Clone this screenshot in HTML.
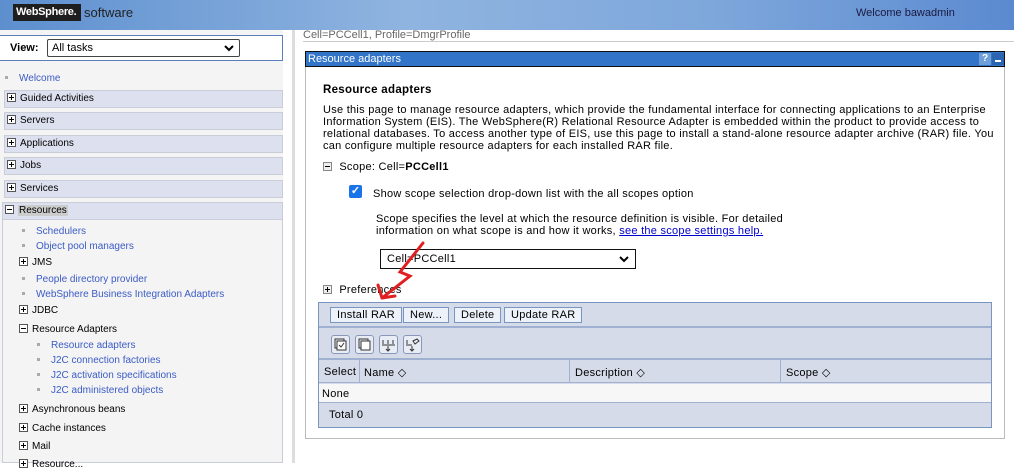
<!DOCTYPE html>
<html><head><meta charset="utf-8"><style>
*{margin:0;padding:0;box-sizing:border-box}
body{width:1014px;height:463px;overflow:hidden;background:#fff;font-family:"Liberation Sans",Tahoma,sans-serif;font-size:11px;color:#000;position:relative}
.a{position:absolute;white-space:nowrap}
#hdr{left:0;top:0;width:1014px;height:30px;background:linear-gradient(90deg,#5d8fcf 0%,#8fb4e0 40%,#7ea7db 70%,#5b8ad0 100%)}
#logo{left:13px;top:4px;width:68px;height:17px;background:#1e1e1e;color:#fff;font-weight:bold;font-size:11px;padding:2px 3px;letter-spacing:-.3px}
.pm{display:inline-block;width:9px;height:9px;border:1px solid #555;background:#fff;position:relative;vertical-align:-1px;margin-right:4px}
.pm:before{content:"";position:absolute;left:1px;top:3px;width:5px;height:1px;background:#000}
.pm.p:after{content:"";position:absolute;left:3px;top:1px;width:1px;height:5px;background:#000}
.nav{font-size:10px}
.sec{left:4px;width:279px;height:18px;background:#dde1ef;border:1px solid #c9cdd8;padding:2px 2px}
.lk{color:#3b5bc6}
.bl{display:inline-block;width:3px;height:3px;background:#aaa;margin-right:11px;vertical-align:2px}
.btn{position:absolute;top:307px;height:16px;border:1px solid #7a95c0;background:#edf1f9;padding:1px 6px;font-size:11px}
.ic{position:absolute;top:335px;width:19px;height:19px;border:1px solid #8898b8;border-radius:3px;background:#e8ecf4}
.main{letter-spacing:.27px}
</style></head><body>
<div id="hdr" class="a"></div>
<div id="logo" class="a">WebSphere.</div>
<div class="a" style="left:84px;top:5px;font-size:13px;color:#222">software</div>
<div class="a" style="left:856px;top:7px;color:#1a1a40">Welcome bawadmin</div>

<div class="a" style="left:0;top:30px;width:283px;height:433px;background:#f4f4f4"></div>
<div class="a" style="left:292px;top:30px;width:3px;height:433px;background:#ddd"></div>
<div class="a" style="left:0;top:35px;width:283px;height:26px;background:#fff;border:1px solid #5b7fb8;border-left:none"></div>
<div class="a" style="left:10px;top:42px;font-weight:bold">View:</div>
<div class="a" style="left:47px;top:39px;width:193px;height:18px;border:1px solid #444;border-radius:2px;background:#fff;padding:2px 4px">All tasks<svg style="position:absolute;right:5px;top:5px" width="10" height="7"><path d="M1 1 L5 5 L9 1" stroke="#000" stroke-width="2" fill="none"/></svg></div>
<div class="a nav" style="left:5px;top:73px"><span class="bl"></span><span class="lk">Welcome</span></div>
<div class="a sec nav" style="top:90px"><span class="pm p"></span>Guided Activities</div>
<div class="a sec nav" style="top:112px"><span class="pm p"></span>Servers</div>
<div class="a sec nav" style="top:135px"><span class="pm p"></span>Applications</div>
<div class="a sec nav" style="top:157px"><span class="pm p"></span>Jobs</div>
<div class="a sec nav" style="top:180px"><span class="pm p"></span>Services</div>
<div class="a" style="left:2px;top:202px;width:281px;height:261px;border:1px solid #c9cdd8;background:#f4f4f4"></div>
<div class="a sec nav" style="top:202px;left:2px;width:281px"><span class="pm"></span><span style="background:#ccc;padding:0 1px">Resources</span></div>
<div class="a nav" style="left:22px;top:226px"><span class="bl"></span><span class="lk">Schedulers</span></div>
<div class="a nav" style="left:22px;top:241px"><span class="bl"></span><span class="lk">Object pool managers</span></div>
<div class="a nav" style="left:19px;top:257px"><span class="pm p"></span>JMS</div>
<div class="a nav" style="left:22px;top:274px"><span class="bl"></span><span class="lk">People directory provider</span></div>
<div class="a nav" style="left:22px;top:289px"><span class="bl"></span><span class="lk">WebSphere Business Integration Adapters</span></div>
<div class="a nav" style="left:19px;top:305px"><span class="pm p"></span>JDBC</div>
<div class="a nav" style="left:19px;top:324px"><span class="pm"></span>Resource Adapters</div>
<div class="a nav" style="left:37px;top:340px"><span class="bl"></span><span class="lk">Resource adapters</span></div>
<div class="a nav" style="left:37px;top:355px"><span class="bl"></span><span class="lk">J2C connection factories</span></div>
<div class="a nav" style="left:37px;top:370px"><span class="bl"></span><span class="lk">J2C activation specifications</span></div>
<div class="a nav" style="left:37px;top:385px"><span class="bl"></span><span class="lk">J2C administered objects</span></div>
<div class="a nav" style="left:19px;top:404px"><span class="pm p"></span>Asynchronous beans</div>
<div class="a nav" style="left:19px;top:423px"><span class="pm p"></span>Cache instances</div>
<div class="a nav" style="left:19px;top:441px"><span class="pm p"></span>Mail</div>
<div class="a nav" style="left:19px;top:459px"><span class="pm p"></span>Resource...</div>

<div class="a" style="left:303px;top:29px;color:#666">Cell=PCCell1, Profile=DmgrProfile</div>
<div class="a" style="left:303px;top:41px;width:711px;height:1px;background:#ccc"></div>
<div class="a" style="left:305px;top:51px;width:700px;height:388px;border:1px solid #bbb;border-top:none"></div>
<div class="a" style="left:305px;top:51px;width:700px;height:16px;background:#3174c8;border:1px solid #111;color:#fff;padding:1px 2px">Resource adapters</div>
<div class="a" style="left:979px;top:53px;width:12px;height:12px;background:#6f9fd8;color:#fff;font-weight:bold;text-align:center;font-size:10px">?</div>
<div class="a" style="left:992px;top:53px;width:12px;height:12px;background:#2b64b0"><div style="margin:7px 3px;height:2px;background:#fff"></div></div>
<div class="a" style="left:323px;top:84px;font-weight:bold;font-size:11.5px;letter-spacing:.3px">Resource adapters</div>
<div class="a main" style="left:323px;top:104px;line-height:12px">Use this page to manage resource adapters, which provide the fundamental interface for connecting applications to an Enterprise<br>Information System (EIS). The WebSphere(R) Relational Resource Adapter is embedded within the product to provide access to<br>relational databases. To access another type of EIS, use this page to install a stand-alone resource adapter archive (RAR) file. You<br>can configure multiple resource adapters for each installed RAR file.</div>
<div class="a main" style="left:323px;top:161px"><span class="pm" style="border-color:#888;background:#eee"></span> Scope: Cell=<b>PCCell1</b></div>
<div class="a" style="left:349px;top:185px;width:13px;height:13px;background:#1a73e8;border-radius:2px;color:#fff;font-size:11px;line-height:13px;text-align:center;font-weight:bold">✓</div>
<div class="a main" style="left:373px;top:188px">Show scope selection drop-down list with the all scopes option</div>
<div class="a main" style="left:376px;top:213px;line-height:12px">Scope specifies the level at which the resource definition is visible. For detailed<br>information on what scope is and how it works, <span style="color:#00c;text-decoration:underline">see the scope settings help.</span></div>
<div class="a main" style="left:380px;top:249px;width:256px;height:20px;border:1px solid #111;background:#fff;padding:3px 6px">Cell=PCCell1<svg style="position:absolute;right:6px;top:6px" width="10" height="7"><path d="M1 1 L5 5 L9 1" stroke="#000" stroke-width="2" fill="none"/></svg></div>
<div class="a main" style="left:323px;top:284px"><span class="pm p" style="border-color:#888;background:#eee"></span> Preferences</div>

<div class="a" style="left:318px;top:302px;width:674px;height:126px;border:1px solid #7a95c0;background:#d5dbe8"></div>
<div class="btn main" style="left:330px">Install RAR</div>
<div class="btn main" style="left:403px">New...</div>
<div class="btn main" style="left:454px">Delete</div>
<div class="btn main" style="left:504px">Update RAR</div>
<div class="a" style="left:319px;top:326px;width:672px;height:2px;background:#9fb0d0"></div>
<div class="ic" style="left:331px"><svg width="17" height="17"><rect x="3" y="3" width="9" height="9" fill="none" stroke="#333"/><rect x="5" y="5" width="9" height="9" fill="#fff" stroke="#333"/><path d="M7 9 L9 11 L12 7" stroke="#333" fill="none"/></svg></div>
<div class="ic" style="left:355px"><svg width="17" height="17"><rect x="3" y="3" width="9" height="9" fill="none" stroke="#333"/><rect x="5" y="5" width="9" height="9" fill="#fff" stroke="#333"/></svg></div>
<div class="ic" style="left:379px"><svg width="17" height="17"><path d="M3 4v4M8 4v4M13 4v4M2 9h13M8 10v5M6 13l2 2 2-2" stroke="#333" fill="none"/></svg></div>
<div class="ic" style="left:403px"><svg width="17" height="17"><path d="M3 4v4M2 9h6M8 10v5M6 13l2 2 2-2M9 5l4-2 2 2-4 3z" stroke="#333" fill="none"/></svg></div>
<div class="a" style="left:319px;top:358px;width:672px;height:2px;background:#9fb0d0"></div>
<div class="a" style="left:319px;top:360px;width:672px;height:23px;background:#d5dbe8;border-bottom:1px solid #9fb0d0"></div>
<div class="a" style="left:359px;top:360px;width:1px;height:23px;background:#9fb0d0"></div>
<div class="a" style="left:569px;top:360px;width:1px;height:23px;background:#9fb0d0"></div>
<div class="a" style="left:780px;top:360px;width:1px;height:23px;background:#9fb0d0"></div>
<div class="a main" style="left:324px;top:366px">Select</div>
<div class="a main" style="left:364px;top:366px">Name ◇</div>
<div class="a main" style="left:575px;top:366px">Description ◇</div>
<div class="a main" style="left:786px;top:366px">Scope ◇</div>
<div class="a main" style="left:319px;top:384px;width:672px;height:19px;background:#f7f7f7;border-bottom:1px solid #9fb0d0;padding:4px 3px">None</div>
<div class="a main" style="left:329px;top:409px">Total 0</div>

<svg class="a" style="left:370px;top:240px" width="60" height="65"><path d="M53 3 L30 32 L40 36 L12 58 M12 58 L8 45 M12 58 L25 56" stroke="#e02020" stroke-width="3" fill="none" stroke-linecap="round"/></svg>
</body></html>
